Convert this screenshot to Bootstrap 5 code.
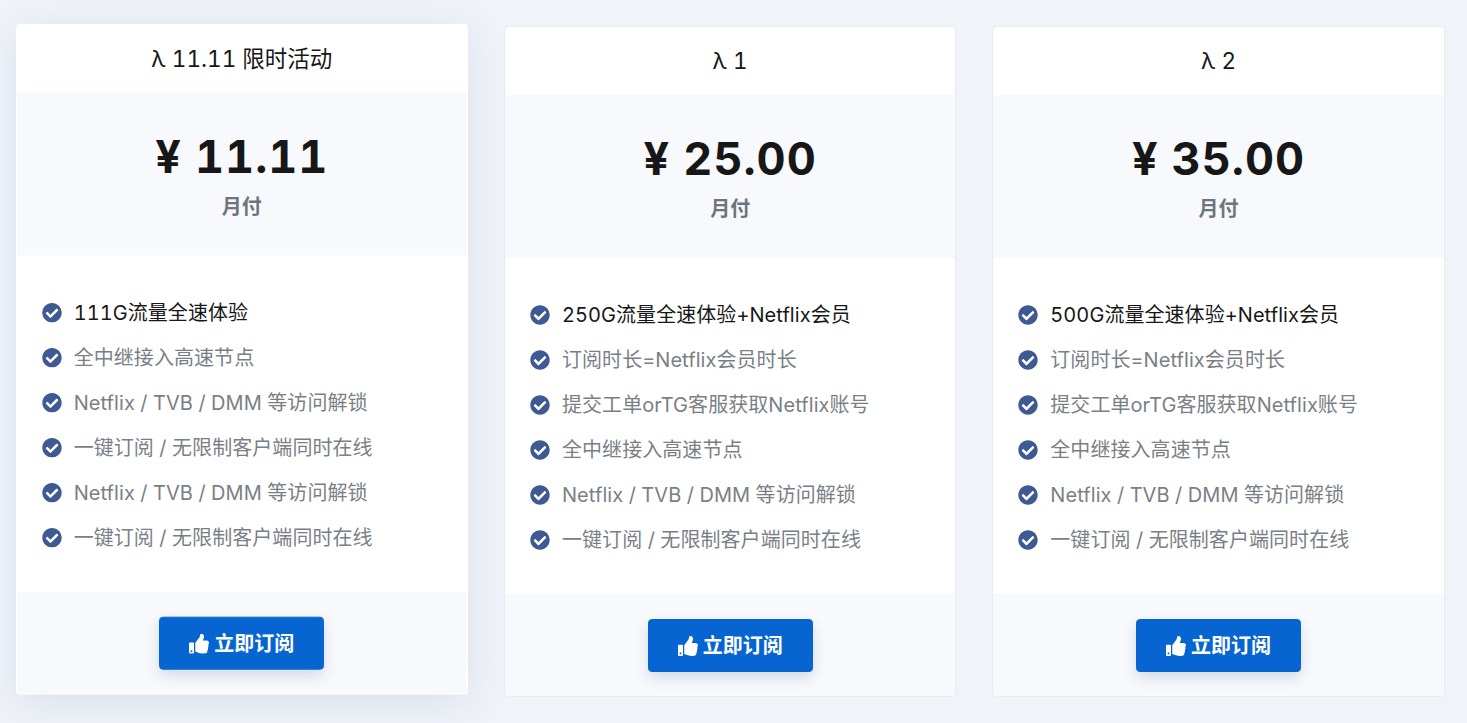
<!DOCTYPE html>
<html lang="zh">
<head>
<meta charset="utf-8">
<title>Plans</title>
<link rel="stylesheet" href="https://cdn.jsdelivr.net/npm/bootstrap@5.3.0/dist/css/bootstrap.min.css">
<style>
html,body{height:723px;overflow:hidden}
body{background:#f0f3f8;font-family:Inter,"Noto Sans CJK SC",sans-serif;color:#171717;font-variant-numeric:tabular-nums}
.plans{padding:26px 0 0 15.67px;display:grid;grid-template-columns:repeat(3,452.33px);gap:36px}
.plan{height:671.4px;border:1px solid #e6ebf4;border-radius:4px;overflow:hidden;background:#fff}
.plan-pop{transform:translateY(-2.3px);border-color:#fff0;box-shadow:0 8px 40px #d8dfed;overflow:visible}
.plan-title{height:68px;font-size:22.5px;line-height:68.4px}
.plan-price{height:163px;background:#f8f9fc;padding-top:34px}
.amount{font-size:45px;font-weight:700;line-height:60px;letter-spacing:1px}
.period{font-size:20px;font-weight:700;line-height:24px;color:#6c757d;margin-top:8px}
.feat{height:336px;padding:34.4px 26px 0 25px;margin:0}
.feat li{height:45px;display:flex;align-items:center;gap:12px;font-size:20px;letter-spacing:.06px;color:#7a7f86}
.feat li:first-child{color:#171717}
.feat svg{width:20px;height:20px;fill:#3f5a92;flex:none}
.plan-foot{height:102.4px;background:#f8f9fc;border-radius:0 0 4px 4px;padding-top:25px}
.buy{width:165px;height:53px;background:#0665d0;border-color:#0665d0;font-size:20px;font-weight:700;border-radius:4px;box-shadow:0 6px 14px #d3dbe9;padding:0;display:inline-flex;align-items:center;justify-content:center;gap:5px}
.buy svg{width:20px;height:20px;fill:#fff}
</style>
</head>
<body>
<svg width="0" height="0" class="d-none">
<symbol id="chk" viewBox="0 0 512 512"><path d="M504 256c0 136.967-111.033 248-248 248S8 392.967 8 256 119.033 8 256 8s248 111.033 248 248zM227.314 387.314l184-184c6.248-6.248 6.248-16.379 0-22.627l-22.627-22.627c-6.248-6.249-16.379-6.249-22.628 0L216 308.118l-70.059-70.059c-6.248-6.248-16.379-6.248-22.628 0l-22.627 22.627c-6.248 6.248-6.248 16.379 0 22.627l104 104c6.249 6.249 16.379 6.249 22.628.001z"/></symbol>
<symbol id="thumb" viewBox="0 0 512 512"><path d="M104 224H24c-13.255 0-24 10.745-24 24v240c0 13.255 10.745 24 24 24h80c13.255 0 24-10.745 24-24V248c0-13.255-10.745-24-24-24zM64 472c-13.255 0-24-10.745-24-24s10.745-24 24-24 24 10.745 24 24-10.745 24-24 24zM384 81.452c0 42.416-25.97 66.208-33.277 94.548h101.723c33.397 0 59.397 27.746 59.553 58.098.084 17.938-7.546 37.249-19.439 49.197l-.11.11c9.836 23.337 8.237 56.037-9.308 79.469 8.681 25.895-.069 57.704-16.382 74.757 4.298 17.598 2.244 32.575-6.148 44.632C440.202 511.587 389.616 512 346.839 512l-2.845-.001c-48.287-.017-87.806-17.598-119.56-31.725-15.957-7.099-36.821-15.887-52.651-16.178-6.54-.12-11.783-5.457-11.783-11.998v-213.77c0-3.2 1.282-6.271 3.558-8.521 39.614-39.144 56.648-80.587 89.117-113.111 14.804-14.832 20.188-37.236 25.393-58.902C282.515 39.293 291.817 0 312 0c24 0 72 8 72 81.452z"/></symbol>
</svg>
<div class="plans">
  <div class="plan plan-pop text-center">
    <div class="plan-title">λ 11.11 限时活动</div>
    <div class="plan-price"><div class="amount">¥ 11.11</div><div class="period">月付</div></div>
    <ul class="feat list-unstyled text-start">
      <li><svg><use href="#chk"/></svg>111G流量全速体验</li>
      <li><svg><use href="#chk"/></svg>全中继接入高速节点</li>
      <li><svg><use href="#chk"/></svg>Netflix / TVB / DMM 等访问解锁</li>
      <li><svg><use href="#chk"/></svg>一键订阅 / 无限制客户端同时在线</li>
      <li><svg><use href="#chk"/></svg>Netflix / TVB / DMM 等访问解锁</li>
      <li><svg><use href="#chk"/></svg>一键订阅 / 无限制客户端同时在线</li>
    </ul>
    <div class="plan-foot"><a class="btn btn-primary buy" href="#"><svg><use href="#thumb"/></svg>立即订阅</a></div>
  </div>
  <div class="plan text-center">
    <div class="plan-title">λ 1</div>
    <div class="plan-price"><div class="amount">¥ 25.00</div><div class="period">月付</div></div>
    <ul class="feat list-unstyled text-start">
      <li><svg><use href="#chk"/></svg>250G流量全速体验+Netflix会员</li>
      <li><svg><use href="#chk"/></svg>订阅时长=Netflix会员时长</li>
      <li><svg><use href="#chk"/></svg>提交工单orTG客服获取Netflix账号</li>
      <li><svg><use href="#chk"/></svg>全中继接入高速节点</li>
      <li><svg><use href="#chk"/></svg>Netflix / TVB / DMM 等访问解锁</li>
      <li><svg><use href="#chk"/></svg>一键订阅 / 无限制客户端同时在线</li>
    </ul>
    <div class="plan-foot"><a class="btn btn-primary buy" href="#"><svg><use href="#thumb"/></svg>立即订阅</a></div>
  </div>
  <div class="plan text-center">
    <div class="plan-title">λ 2</div>
    <div class="plan-price"><div class="amount">¥ 35.00</div><div class="period">月付</div></div>
    <ul class="feat list-unstyled text-start">
      <li><svg><use href="#chk"/></svg>500G流量全速体验+Netflix会员</li>
      <li><svg><use href="#chk"/></svg>订阅时长=Netflix会员时长</li>
      <li><svg><use href="#chk"/></svg>提交工单orTG客服获取Netflix账号</li>
      <li><svg><use href="#chk"/></svg>全中继接入高速节点</li>
      <li><svg><use href="#chk"/></svg>Netflix / TVB / DMM 等访问解锁</li>
      <li><svg><use href="#chk"/></svg>一键订阅 / 无限制客户端同时在线</li>
    </ul>
    <div class="plan-foot"><a class="btn btn-primary buy" href="#"><svg><use href="#thumb"/></svg>立即订阅</a></div>
  </div>
</div>
<script src="https://cdn.jsdelivr.net/npm/bootstrap@5.3.0/dist/js/bootstrap.bundle.min.js"></script>
</body>
</html>
